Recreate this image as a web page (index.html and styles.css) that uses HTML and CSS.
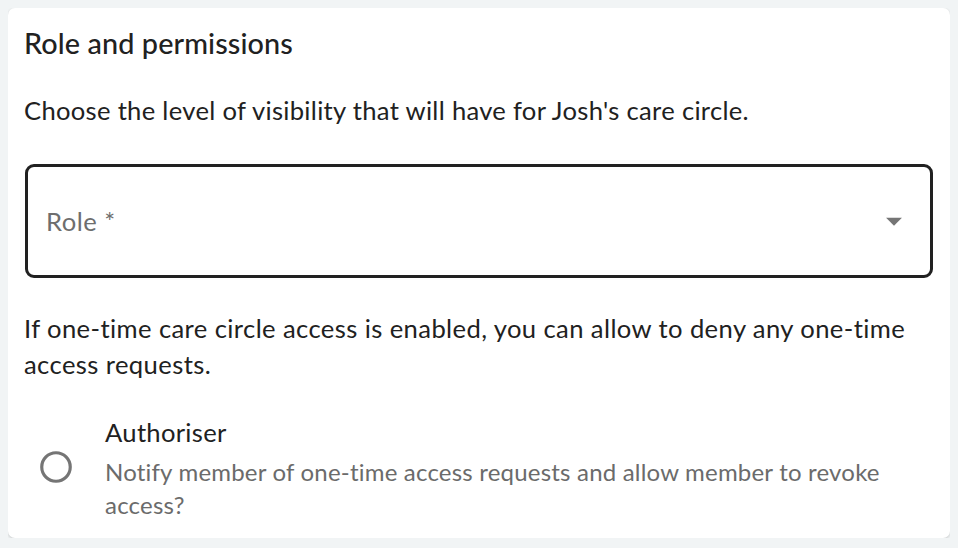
FILE: index.html
```html
<!DOCTYPE html>
<html lang="en">
<head>
    <meta charset="UTF-8">
    <meta name="viewport" content="width=device-width, initial-scale=1.0">
    <title>Role and permissions</title>
    <link rel="stylesheet" href="styles.css">
</head>
<body>

<div class="card">
    <h2 class="card-title">Role and permissions</h2>
    <p class="intro">Choose the level of visibility that will have for Josh's care circle.</p>

    <div class="select">
        <span class="select-label">Role *</span>
        <svg class="select-arrow" viewBox="0 0 24 24"><path d="M7 10l5 5 5-5z"/></svg>
    </div>

    <p class="note">If one-time care circle access is enabled, you can allow to deny any one-time access requests.</p>

    <label class="option">
        <svg class="radio" viewBox="0 0 24 24"><circle cx="12" cy="12" r="9" /></svg>
        <span class="option-text">
            <span class="option-title">Authoriser</span>
            <span class="option-desc">Notify member of one-time access requests and allow member to revoke access?</span>
        </span>
    </label>
</div>

</body>
</html>
```

FILE: styles.css
```css
body {
    margin: 8px;
    background-color: #f1f4f5;
    font-family: Lato, "Open Sans", sans-serif;
    color: #212121;
}
.card {
    background-color: #fff;
    border-radius: 7px;
    box-shadow: 0 1px 3px rgba(0, 0, 0, 0.18);
    padding: 16px 16px 10px 16px;
    height: 530px;
    box-sizing: border-box;
}
.card-title {
    margin: 0;
    font-size: 28.8px;
    font-weight: 500;
    line-height: 38px;
    letter-spacing: 0.1px;
}
.intro {
    margin: 30px 0 0 0;
    font-size: 25.6px;
    line-height: 36px;
    letter-spacing: 0.3px;
}
.select {
    margin: 36px 1px 0 1px;
    height: 114px;
    box-sizing: border-box;
    border: 3px solid #212121;
    border-radius: 9px;
    display: flex;
    align-items: center;
    justify-content: space-between;
    padding: 0 17px 0 18px;
}
.select-label {
    font-size: 25.6px;
    color: #6e6e6e;
    letter-spacing: 0.5px;
}
.select-arrow {
    width: 38px;
    height: 38px;
    fill: #757575;
}
.note {
    margin: 32px 0 0 0;
    font-size: 25.6px;
    line-height: 36px;
    letter-spacing: 0.4px;
}
.option {
    display: flex;
    align-items: center;
    margin-top: 31px;
}
.radio {
    width: 38px;
    height: 38px;
    margin-left: 13px;
    fill: none;
    stroke: #757575;
    stroke-width: 2;
    flex-shrink: 0;
}
.option-text {
    display: flex;
    flex-direction: column;
    margin-left: 30px;
}
.option-title {
    font-size: 25.6px;
    line-height: 38px;
    letter-spacing: 0.3px;
    margin-bottom: 4px;
}
.option-desc {
    font-size: 24px;
    line-height: 33px;
    letter-spacing: 0.2px;
    color: #6b6b6b;
}
```
